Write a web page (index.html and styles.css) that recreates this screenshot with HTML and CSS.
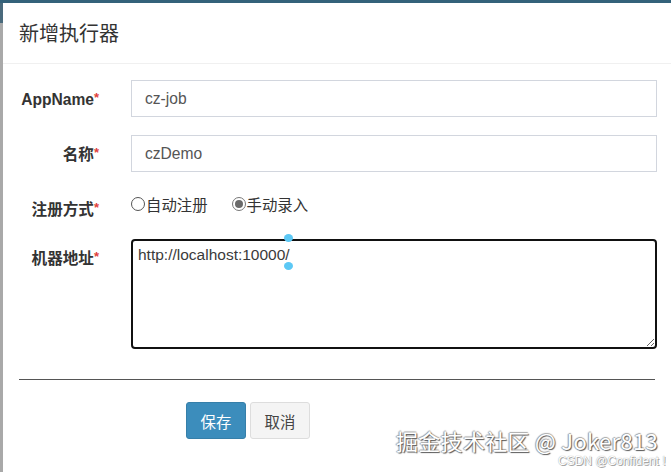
FILE: index.html
```html
<!DOCTYPE html>
<html lang="zh-CN">
<head>
<meta charset="utf-8">
<title>新增执行器</title>
<link rel="stylesheet" href="styles.css">
</head>
<body>
<div class="topbar"></div>
<div class="stage">
  <div class="side"></div>
  <div class="modal">
    <div class="modal-header"><h4 class="modal-title">新增执行器</h4></div>
    <div class="modal-body">
      <div class="form-group">
        <label class="ctl-label">AppName<span class="req">*</span></label>
        <div class="ctl"><div class="input">cz-job</div></div>
      </div>
      <div class="form-group">
        <label class="ctl-label">名称<span class="req">*</span></label>
        <div class="ctl"><div class="input">czDemo</div></div>
      </div>
      <div class="form-group radio-group">
        <label class="ctl-label">注册方式<span class="req">*</span></label>
        <div class="ctl radios">
          <span class="radio"><span class="dot"></span>自动注册</span>
          <span class="radio checked"><span class="dot"></span>手动录入</span>
        </div>
      </div>
      <div class="form-group">
        <label class="ctl-label">机器地址<span class="req">*</span></label>
        <div class="ctl area-wrap">
          <textarea class="area">http://localhost:10000/</textarea>
          <span class="handle h-top"></span>
          <span class="handle h-bottom"></span>
        </div>
      </div>
      <hr class="sep">
      <div class="actions">
        <button class="btn btn-primary">保存</button>
        <button class="btn btn-default">取消</button>
      </div>
    </div>
  </div>
</div>
<div class="watermark">掘金技术社区 @ Joker813</div>
<div class="watermark2">CSDN @Confident !</div>
</body>
</html>
```

FILE: styles.css
```css
html, body {
  margin: 0;
  padding: 0;
  height: 100%;
  background: #fff;
  overflow: hidden;
}
body {
  font-family: "Liberation Sans", Arial, "Noto Sans CJK SC", sans-serif;
  color: #333;
  position: relative;
}
.topbar {
  height: 3px;
  background: #34627a;
}
.stage {
  display: flex;
  height: 469px;
}
.side {
  width: 3px;
  flex: none;
  background: linear-gradient(#4a6a7c 0, #4a6a7c 20px, #a9a9a9 20px, #a9a9a9 100%);
}
.modal {
  flex: 1;
  background: #fff;
}
.modal-header {
  padding: 16px 16px;
  border-bottom: 1px solid #f0f0f0;
}
.modal-title {
  margin: 0;
  font-family: "Noto Sans CJK SC", sans-serif;
  font-weight: 400;
  font-size: 20px;
  line-height: 28px;
  color: #333;
}
.modal-body {
  padding: 16px 14px 0 16px;
}
.form-group {
  display: flex;
  align-items: flex-start;
  margin-bottom: 18px;
}
.radio-group {
  margin-bottom: 16px;
  height: 33px;
}
.ctl-label {
  width: 80px;
  flex: none;
  text-align: right;
  font-weight: 700;
  font-size: 15.6px;
  line-height: 22px;
  padding-top: 7px;
  margin-right: 32px;
  color: #333;
  font-family: "Liberation Sans", Arial, "Noto Sans CJK SC", sans-serif;
  white-space: nowrap;
}
.req {
  color: #e0403a;
  font-size: 13px;
  vertical-align: 3px;
  font-weight: 700;
}
.ctl {
  flex: 1;
}
.input {
  height: 37px;
  box-sizing: border-box;
  border: 1px solid #d2d6de;
  padding: 0 13px;
  font-size: 15.6px;
  line-height: 35px;
  color: #555;
}
.radios {
  display: flex;
  gap: 24px;
  padding-top: 3px;
  font-family: "Noto Sans CJK SC", sans-serif;
  font-size: 15.4px;
  line-height: 22px;
  color: #333;
}
.radio {
  display: inline-flex;
  align-items: center;
}
.dot {
  width: 12px;
  height: 12px;
  border: 1px solid #555;
  border-radius: 50%;
  margin-right: 1px;
  position: relative;
  background: #fff;
}
.checked .dot {
  border-color: #777;
}
.checked .dot::after {
  content: "";
  position: absolute;
  left: 2px;
  top: 2px;
  width: 8px;
  height: 8px;
  border-radius: 50%;
  background: #6a6a6a;
}
.area-wrap {
  position: relative;
}
.area {
  display: block;
  width: 100%;
  height: 110px;
  box-sizing: border-box;
  border: 2px solid #111;
  border-radius: 4px;
  padding: 3px 5px;
  font-family: "Liberation Sans", Arial, sans-serif;
  font-size: 15.5px;
  line-height: 22px;
  color: #3a3a3a;
  outline: none;
  resize: vertical;
  margin: 0;
}
.handle {
  position: absolute;
  width: 9px;
  height: 8px;
  border-radius: 50%;
  background: #5cc8f5;
  left: 153px;
}
.h-top {
  top: -5px;
}
.h-bottom {
  top: 23px;
}
.sep {
  border: 0;
  border-top: 1px solid #555;
  margin: 30px 2px 22px 0;
}
.actions {
  padding-left: 167px;
  display: flex;
  gap: 4px;
}
.btn {
  width: 60px;
  height: 37px;
  border-radius: 3px;
  font-family: "Noto Sans CJK SC", sans-serif;
  font-size: 15.4px;
  padding: 0;
  cursor: pointer;
}
.btn-primary {
  background: #3c8dbc;
  border: 1px solid #367fa9;
  color: #fff;
}
.btn-default {
  background: #f4f4f4;
  border: 1px solid #ddd;
  color: #444;
}
.watermark {
  position: absolute;
  left: 396px;
  top: 427px;
  font-family: "Noto Sans CJK SC", sans-serif;
  font-size: 22px;
  line-height: 26px;
  color: #fff;
  letter-spacing: 0.3px;
  text-shadow: 1px 1px 1px #555, -1px 0 1px #999, 0 -1px 1px #aaa;
  white-space: nowrap;
}
.watermark2 {
  position: absolute;
  left: 558px;
  top: 455px;
  font-family: "Liberation Sans", Arial, sans-serif;
  font-size: 12px;
  line-height: 13px;
  color: #fff;
  text-shadow: 0 0 1px #888, 1px 1px 0 #aaa;
  white-space: nowrap;
}
```
